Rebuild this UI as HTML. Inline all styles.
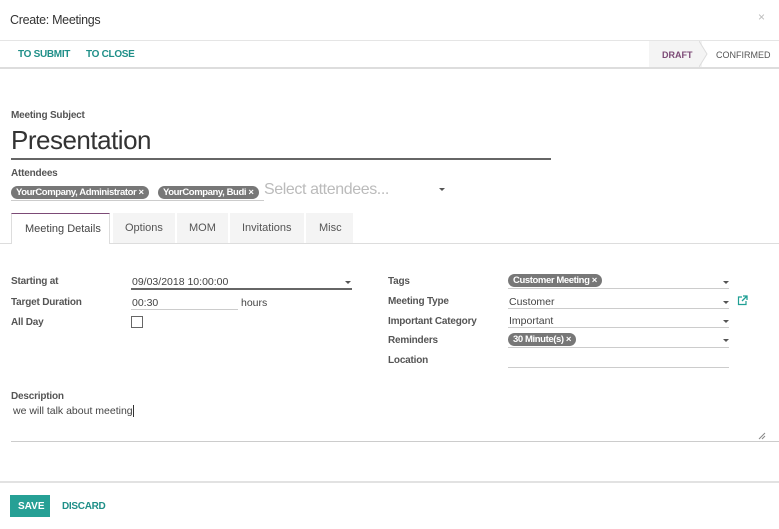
<!DOCTYPE html>
<html><head><meta charset="utf-8"><style>
*{margin:0;padding:0;box-sizing:border-box}
body{width:779px;height:529px;position:relative;overflow:hidden;background:#fff;font-family:"Liberation Sans",sans-serif;color:#4c4c4c;font-size:11px}
.a{position:absolute;white-space:nowrap}
.lbl{font-weight:bold;font-size:10px;color:#555;letter-spacing:-0.2px}
.ln{position:absolute;height:1px;background:#ccc}
.tag{position:absolute;background:#777;color:#fff;border-radius:7px;height:13px;font-size:9.5px;font-weight:bold;line-height:13px;padding:0 5px;white-space:nowrap;letter-spacing:-0.4px}
.car{position:absolute;width:0;height:0;border-left:3px solid transparent;border-right:3px solid transparent;border-top:3px solid #555}
.v{font-size:10.5px;color:#444}
</style></head><body>
<div class="a" style="left:10px;top:13px;font-size:12.5px;color:#333;letter-spacing:-0.3px">Create: Meetings</div>
<div class="a" style="left:758px;top:10px;font-size:12px;color:#bbb">×</div>
<div class="ln" style="left:0;top:40px;width:779px;background:#e5e5e5"></div>
<div class="a" style="left:18px;top:49px;font-size:10px;font-weight:bold;color:#1f8f88;letter-spacing:-0.3px">TO SUBMIT</div>
<div class="a" style="left:86px;top:49px;font-size:10px;font-weight:bold;color:#1f8f88;letter-spacing:-0.3px">TO CLOSE</div>
<div style="position:absolute;left:649px;top:41px;width:53px;height:26px;background:#f4f4f4"></div>
<svg style="position:absolute;left:699px;top:41px" width="10" height="26"><path d="M0 0 L8 13 L0 26" fill="#f4f4f4" stroke="#ddd"/></svg>
<div class="a" style="left:662px;top:50px;font-size:9px;font-weight:bold;color:#7c4a76">DRAFT</div>
<div class="a" style="left:716px;top:50px;font-size:9px;color:#555">CONFIRMED</div>
<div class="ln" style="left:0;top:67px;width:779px;height:2px;background:#ddd"></div>
<div class="a lbl" style="left:11px;top:110px">Meeting Subject</div>
<div class="a" style="left:11px;top:125px;font-size:26px;color:#333;letter-spacing:-0.5px">Presentation</div>
<div class="ln" style="left:11px;top:158px;width:540px;height:2px;background:#666"></div>
<div class="a lbl" style="left:11px;top:168px">Attendees</div>
<div class="tag" style="left:11px;top:186px">YourCompany, Administrator ×</div>
<div class="tag" style="left:158px;top:186px">YourCompany, Budi ×</div>
<div class="a" style="left:264px;top:181px;font-size:16px;color:#bbb;letter-spacing:-0.4px">Select attendees...</div>
<div class="car" style="left:439px;top:188px"></div>
<div class="ln" style="left:11px;top:200px;width:253px"></div>
<div style="position:absolute;left:11px;top:213px;width:99px;height:31px;border:1px solid #ddd;border-top:1px solid #7c4a76;border-bottom:none;background:#fff"></div>
<div class="a" style="left:25px;top:223px;font-size:11px;color:#444">Meeting Details</div>
<div style="position:absolute;left:113px;top:213px;width:62px;height:30px;background:#f4f4f4"></div>
<div class="a" style="left:125px;top:222px;font-size:11px;color:#555">Options</div>
<div style="position:absolute;left:177px;top:213px;width:51px;height:30px;background:#f4f4f4"></div>
<div class="a" style="left:189px;top:222px;font-size:11px;color:#555">MOM</div>
<div style="position:absolute;left:230px;top:213px;width:74px;height:30px;background:#f4f4f4"></div>
<div class="a" style="left:242px;top:222px;font-size:11px;color:#555">Invitations</div>
<div style="position:absolute;left:306px;top:213px;width:47px;height:30px;background:#f4f4f4"></div>
<div class="a" style="left:319px;top:222px;font-size:11px;color:#555">Misc</div>
<div class="ln" style="left:0;top:243px;width:779px;background:#ddd"></div>
<div style="position:absolute;left:12px;top:243px;width:97px;height:1px;background:#fff"></div>

<div class="a lbl" style="left:11px;top:276px">Starting at</div>
<div class="a v" style="left:132px;top:276px">09/03/2018 10:00:00</div>
<div class="car" style="left:345px;top:281px"></div>
<div class="ln" style="left:131px;top:288px;width:221px;height:2px;background:#666"></div>
<div class="a lbl" style="left:11px;top:297px">Target Duration</div>
<div class="a v" style="left:132px;top:297px">00:30</div>
<div class="ln" style="left:131px;top:309px;width:107px"></div>
<div class="a v" style="left:241px;top:297px">hours</div>
<div class="a lbl" style="left:11px;top:317px">All Day</div>
<div style="position:absolute;left:131px;top:316px;width:12px;height:12px;border:1px solid #666"></div>

<div class="a lbl" style="left:388px;top:276px">Tags</div>
<div class="tag" style="left:508px;top:274px">Customer Meeting ×</div>
<div class="car" style="left:723px;top:281px"></div>
<div class="ln" style="left:508px;top:288px;width:221px"></div>
<div class="a lbl" style="left:388px;top:296px">Meeting Type</div>
<div class="a v" style="left:509px;top:296px">Customer</div>
<div class="car" style="left:723px;top:301px"></div>
<div class="ln" style="left:508px;top:308px;width:221px"></div>
<svg style="position:absolute;left:737px;top:295px" width="11" height="11" viewBox="0 0 11 11"><path d="M5 2H1.5V9.5H9V6" fill="none" stroke="#1f9f94" stroke-width="1.2"/><path d="M6 1H10V5M10 1L5 6" fill="none" stroke="#1f9f94" stroke-width="1.3"/></svg>
<div class="a lbl" style="left:388px;top:316px">Important Category</div>
<div class="a v" style="left:509px;top:315px">Important</div>
<div class="car" style="left:723px;top:320px"></div>
<div class="ln" style="left:508px;top:327px;width:221px"></div>
<div class="a lbl" style="left:388px;top:335px">Reminders</div>
<div class="tag" style="left:508px;top:333px">30 Minute(s) ×</div>
<div class="car" style="left:723px;top:339px"></div>
<div class="ln" style="left:508px;top:347px;width:221px"></div>
<div class="a lbl" style="left:388px;top:355px">Location</div>
<div class="ln" style="left:508px;top:367px;width:221px"></div>

<div class="a lbl" style="left:11px;top:391px">Description</div>
<div class="a v" style="left:13px;top:405px">we will talk about meeting<span style="display:inline-block;width:1px;height:12px;background:#333;vertical-align:middle"></span></div>
<div class="ln" style="left:11px;top:441px;width:768px"></div>
<svg style="position:absolute;left:758px;top:432px" width="8" height="8"><path d="M1 7L7 1M4 7L7 4" stroke="#888"/></svg>
<div class="ln" style="left:0;top:481px;width:779px;height:2px;background:#e2e2e2"></div>
<div style="position:absolute;left:10px;top:495px;width:40px;height:22px;background:#26a095"></div>
<div class="a" style="left:18px;top:501px;font-size:10px;font-weight:bold;color:#fff">SAVE</div>
<div class="a" style="left:62px;top:501px;font-size:10px;font-weight:bold;color:#1f8f88;letter-spacing:-0.3px">DISCARD</div>
</body></html>
